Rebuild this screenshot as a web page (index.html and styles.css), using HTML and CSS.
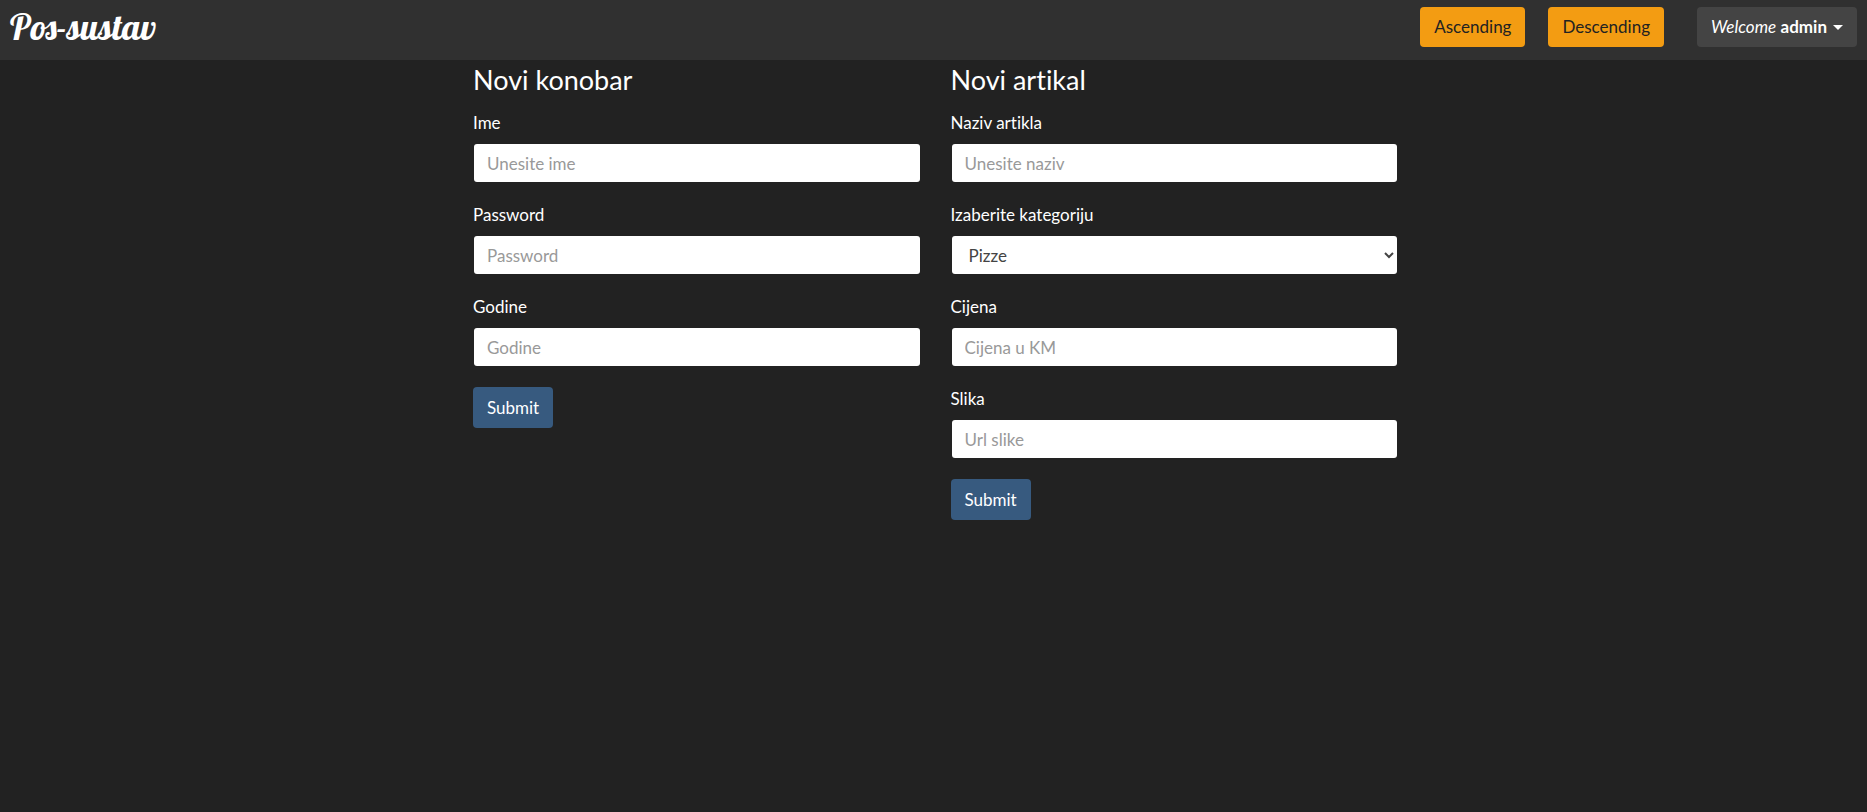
FILE: index.html
```html
<!DOCTYPE html>
<html lang="hr">
<head>
<meta charset="utf-8">
<meta name="viewport" content="width=device-width, initial-scale=1">
<title>Pos-sustav</title>
<link rel="stylesheet" href="styles.css">
</head>
<body>
<header class="navbar">
  <a class="brand" href="#">Pos-sustav</a>
  <nav class="actions">
    <div class="sorting">
      <button class="btn btn-warning" type="button">Ascending</button>
      <button class="btn btn-warning" type="button">Descending</button>
    </div>
    <button class="btn btn-user" type="button" aria-haspopup="true"><span><em>Welcome</em> <strong>admin</strong></span><span class="caret"></span></button>
  </nav>
</header>
<main class="forms">
  <form class="form">
    <h2 class="title">Novi konobar</h2>
    <div class="group">
      <label for="ime">Ime</label>
      <input class="control" id="ime" type="text" placeholder="Unesite ime">
    </div>
    <div class="group">
      <label for="password">Password</label>
      <input class="control" id="password" type="password" placeholder="Password">
    </div>
    <div class="group">
      <label for="godine">Godine</label>
      <input class="control" id="godine" type="text" placeholder="Godine">
    </div>
    <button class="btn btn-primary" type="submit">Submit</button>
  </form>
  <form class="form">
    <h2 class="title">Novi artikal</h2>
    <div class="group">
      <label for="naziv">Naziv artikla</label>
      <input class="control" id="naziv" type="text" placeholder="Unesite naziv">
    </div>
    <div class="group">
      <label for="kategorija">Izaberite kategoriju</label>
      <select class="control" id="kategorija"><option>Pizze</option></select>
    </div>
    <div class="group">
      <label for="cijena">Cijena</label>
      <input class="control" id="cijena" type="text" placeholder="Cijena u KM">
    </div>
    <div class="group">
      <label for="slika">Slika</label>
      <input class="control" id="slika" type="text" placeholder="Url slike">
    </div>
    <button class="btn btn-primary" type="submit">Submit</button>
  </form>
</main>
</body>
</html>
```
FILE: styles.css
```css
*, *::before, *::after { box-sizing: border-box; }

body {
  margin: 0;
  min-height: 100vh;
  background: #222;
  color: #fff;
  font: 17px/24px Lato, sans-serif;
  font-variant-ligatures: no-common-ligatures;
}

.navbar {
  display: flex;
  align-items: flex-start;
  justify-content: space-between;
  min-height: 60px;
  padding: 7px 10px;
  background: #303030;
}

.brand {
  color: #fff;
  font: 36px/40px Lobster, "Liberation Serif", serif;
  text-decoration: none;
}

.actions { display: flex; gap: 33px; }
.sorting { display: flex; gap: 23px; }

.btn {
  display: inline-flex;
  align-items: center;
  height: 40px;
  padding: 0 14px;
  border: 0;
  border-radius: 4px;
  font: inherit;
  color: #fff;
  cursor: pointer;
}

.btn-warning { background: #f39c12; color: #222; }
.btn-user { gap: 6px; background: #444; }
.btn-primary { height: 41px; background: #375a7f; }

.caret {
  border: 5px solid transparent;
  border-top-color: #fff;
  border-bottom: 0;
}

.forms {
  display: grid;
  grid-template-columns: 1fr 1fr;
  gap: 30px;
  align-items: start;
  max-width: 929px;
  margin: 0 auto;
  padding-left: 4px;
}

.title {
  margin: 4px 0 15px;
  font-size: 27px;
  line-height: 32px;
  font-weight: 400;
}

.group { margin-bottom: 20px; }
.group label { display: block; margin-bottom: 8px; }

.control {
  display: block;
  width: 100%;
  height: 40px;
  padding: 0 13px;
  border: 1px solid transparent;
  border-radius: 4px;
  background: #fff;
  background-clip: padding-box;
  color: #444;
  font: inherit;
}

select.control { padding: 0 0 0 13px; }
.control::placeholder { color: #999; opacity: 1; }
```
